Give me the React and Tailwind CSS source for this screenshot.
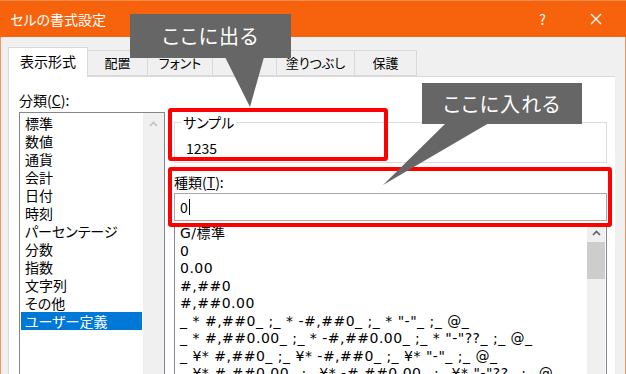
import React from "react";

const categories = [
  "標準",
  "数値",
  "通貨",
  "会計",
  "日付",
  "時刻",
  "パーセンテージ",
  "分数",
  "指数",
  "文字列",
  "その他",
  "ユーザー定義",
];

const formats = [
  "G/標準",
  "0",
  "0.00",
  "#,##0",
  "#,##0.00",
  '_ * #,##0_ ;_ * -#,##0_ ;_ * "-"_ ;_ @_',
  '_ * #,##0.00_ ;_ * -#,##0.00_ ;_ * "-"??_ ;_ @_',
  '_ ¥* #,##0_ ;_ ¥* -#,##0_ ;_ ¥* "-"_ ;_ @_',
  '_ ¥* #,##0.00_ ;_ ¥* -#,##0.00_ ;_ ¥* "-"??_ ;_ @_',
];

const tabs = [
  { label: "配置", w: "w-[60px]" },
  { label: "フォント", w: "w-[65px]" },
  { label: "罫線", w: "w-[64px]" },
  { label: "塗りつぶし", w: "w-[78px]" },
  { label: "保護", w: "w-[62px]" },
];

function UpArrow({ color }) {
  return (
    <svg width="9" height="6" viewBox="0 0 9 6">
      <polyline
        points="1,5 4.5,1.5 8,5"
        fill="none"
        stroke={color}
        strokeWidth="1.6"
      />
    </svg>
  );
}

export default function App() {
  return (
    <div className="relative w-[626px] h-[374px] overflow-hidden bg-[#f0f0f0] font-['Noto_Sans_CJK_JP',sans-serif] [font-feature-settings:'palt'] text-black">
      {/* TITLE BAR */}
      <div className="h-[37px] bg-[#f7630c] border-t border-[#fb8a4a] flex items-center justify-between pl-[10px] pr-[24px] text-white">
        <span className="text-[14px]">セルの書式設定</span>
        <div className="flex items-center gap-[44px]">
          <span className="text-[14px]">?</span>
          <svg width="12" height="12" viewBox="0 0 12 12">
            <path d="M1 1L11 11M11 1L1 11" stroke="#fff" strokeWidth="1.3" />
          </svg>
        </div>
      </div>

      {/* BODY */}
      <div className="h-[337px] border-x border-[#f7955a] flex flex-col">
        {/* TABS */}
        <div className="mt-[10px] ml-[7px] flex items-end h-[30px]">
          <div className="w-[80px] h-[30px] bg-white border border-b-0 border-[#d9d9d9] flex items-center justify-center text-[14px] relative z-10 -mb-px pb-[2px]">
            表示形式
          </div>
          {tabs.map((t) => (
            <div
              key={t.label}
              className={`${t.w} h-[26px] border border-l-0 border-[#d9d9d9] flex items-center justify-center text-[13px]`}
            >
              {t.label}
            </div>
          ))}
        </div>

        {/* PANEL */}
        <div className="flex-1 ml-[7px] mr-[10px] bg-white border-l border-t border-[#d9d9d9] flex gap-[9px] pl-[10px] pr-[8px]">
          {/* LEFT */}
          <div className="w-[146px] flex flex-col">
            <div className="text-[14px] h-[35px] pt-[13px] leading-[20px]">
              分類(<u>C</u>):
            </div>
            <div className="flex-1 border border-[#828790] flex">
              <div className="flex-1 pt-[1px] pl-[1px]">
                {categories.map((c) => (
                  <div
                    key={c}
                    className={`h-[18px] leading-[18px] pl-[4px] text-[14px] w-[121px] ${
                      c === "ユーザー定義" ? "bg-[#0078d7] text-white" : ""
                    }`}
                  >
                    {c}
                  </div>
                ))}
              </div>
              <div className="w-[21px] bg-[#f0f0f0] flex justify-center pt-[8px]">
                <UpArrow color="#c0c0c0" />
              </div>
            </div>
          </div>

          {/* RIGHT */}
          <div className="flex-1 flex flex-col">
            <div className="mt-[45px] h-[41px] border border-[#dcdcdc] relative">
              <span className="absolute -top-[11px] left-[6px] bg-white px-[2px] text-[14px] leading-[20px]">
                サンプル
              </span>
              <div className="pt-[15px] pl-[11px] text-[14px] leading-[20px]">
                1235
              </div>
            </div>
            <div className="mt-[9px] text-[14px] leading-[20px]">
              種類(<u>T</u>):
            </div>
            <div className="mt-[1px] h-[28px] border border-[#a9a9b0] flex items-center pl-[5px] text-[14px]">
              0<span className="w-px h-[16px] bg-black ml-[1px]" />
            </div>
            <div className="mt-[2px] flex-1 border border-[#828790] flex">
              <div className="flex-1 pl-[5px] pt-[1px] font-['DejaVu_Sans','Noto_Sans_CJK_JP',sans-serif]">
                {formats.map((f) => (
                  <div
                    key={f}
                    className="h-[17.5px] leading-[17px] text-[14px] tracking-[0.5px] whitespace-pre"
                  >
                    {f}
                  </div>
                ))}
              </div>
              <div className="w-[18px] mr-[1px] bg-[#f0f0f0] flex flex-col items-center">
                <div className="h-[18px] flex items-center">
                  <UpArrow color="#606060" />
                </div>
                <div className="w-full h-[37px] bg-[#cdcdcd]" />
              </div>
            </div>
          </div>
        </div>
      </div>

      {/* ANNOTATIONS */}
      <div className="absolute left-[168px] top-[108px] w-[220px] h-[53px] border-[4px] border-[#ff0000] rounded-[3px]" />
      <div className="absolute left-[168px] top-[167px] w-[444px] h-[60px] border-[4px] border-[#ff0000] rounded-[3px]" />

      <div className="absolute left-[130px] top-[14px] w-[161px] h-[44px] bg-[#666666] flex items-center justify-center text-white text-[20px] tracking-[1px]">
        ここに出る
      </div>
      <svg
        className="absolute left-0 top-0"
        width="626"
        height="374"
        viewBox="0 0 626 374"
      >
        <polygon points="225,57 264,57 250,107" fill="#666666" />
        <polygon points="446,123 489,123 383,185" fill="#666666" />
      </svg>
      <div className="absolute left-[422px] top-[83px] w-[160px] h-[41px] bg-[#666666] flex items-center justify-center text-white text-[20px] tracking-[1px]">
        ここに入れる
      </div>
    </div>
  );
}
